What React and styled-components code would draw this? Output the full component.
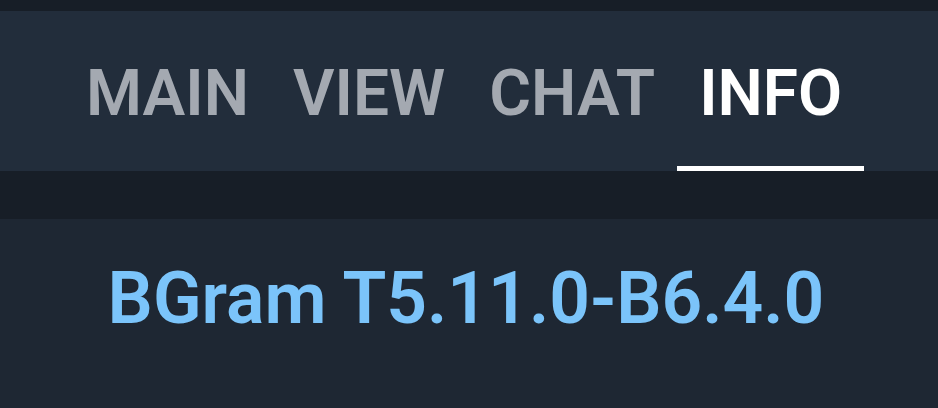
import React from "react";
import styled, { createGlobalStyle } from "styled-components";

const Global = createGlobalStyle`
  html, body { margin: 0; padding: 0; background: #1e2733; }
  body { font-family: Roboto, "Noto Sans", sans-serif; }
`;

const Page = styled.div`
  width: 938px;
  height: 408px;
  display: flex;
  flex-direction: column;
  background: #1e2733;
  overflow: hidden;
`;

const StatusStrip = styled.div`
  height: 11px;
  background: #171e27;
`;

const TabBar = styled.nav`
  height: 160px;
  background: #222d3b;
  display: flex;
  align-items: stretch;
  padding-left: 64px;
`;

const Tab = styled.div`
  position: relative;
  display: flex;
  align-items: center;
  justify-content: center;
  padding: 4px 22px 0;
  font-size: 64px;
  font-weight: 600;
  color: ${(p) => (p.$active ? "#ffffff" : "#a4a9b1")};
  &::after {
    content: "";
    display: ${(p) => (p.$active ? "block" : "none")};
    position: absolute;
    left: 0;
    right: 0;
    bottom: 0;
    height: 5px;
    background: #ffffff;
  }
`;

const Divider = styled.div`
  height: 48px;
  background: #171e27;
`;

const Content = styled.div`
  flex: 1;
  display: flex;
  justify-content: center;
  padding-top: 37px;
`;

const Version = styled.div`
  font-size: 71.4px;
  font-weight: 600;
  color: #7bc4fa;
  line-height: 1.2;
  margin-left: -6px;
`;

export default function App() {
  const tabs = ["MAIN", "VIEW", "CHAT", "INFO"];
  return (
    <Page>
      <Global />
      <StatusStrip />
      <TabBar>
        {tabs.map((t) => (
          <Tab key={t} $active={t === "INFO"}>
            {t}
          </Tab>
        ))}
      </TabBar>
      <Divider />
      <Content>
        <Version>BGram T5.11.0-B6.4.0</Version>
      </Content>
    </Page>
  );
}
